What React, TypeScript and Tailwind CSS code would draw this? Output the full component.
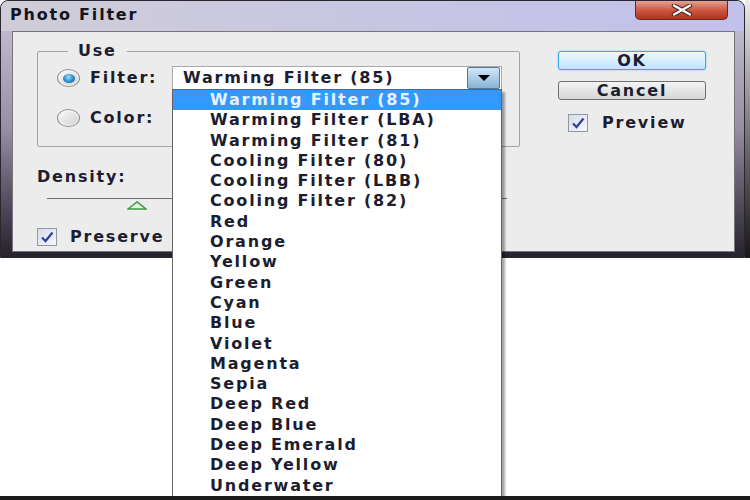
import React from 'react';

const filters = [
    'Warming Filter (85)',
    'Warming Filter (LBA)',
    'Warming Filter (81)',
    'Cooling Filter (80)',
    'Cooling Filter (LBB)',
    'Cooling Filter (82)',
    'Red',
    'Orange',
    'Yellow',
    'Green',
    'Cyan',
    'Blue',
    'Violet',
    'Magenta',
    'Sepia',
    'Deep Red',
    'Deep Blue',
    'Deep Emerald',
    'Deep Yellow',
    'Underwater',
];

const Radio: React.FC<{ checked?: boolean }> = ({ checked }) => (
    <span className="flex h-[18px] w-[23px] shrink-0 items-center justify-center rounded-[50%] border border-[#8b8c8e] bg-linear-to-br from-[#fbfbfb] to-[#cfd0d2] shadow-[inset_0_0_0_1px_#f8f8f8]">
        {checked && (
            <span className="h-[9px] w-[12px] rounded-[50%] bg-[radial-gradient(circle_at_45%_35%,#9be0ff,#2a86c8_55%,#10507f)]" />
        )}
    </span>
);

const CheckBox = () => (
    <span className="flex h-[18px] w-[20px] shrink-0 items-center justify-center border border-[#8e98ab] bg-linear-to-br from-[#d7dce8] to-[#f7f8fb]">
        <svg width="14" height="12" viewBox="0 0 14 12">
            <path d="M2 6.5 L5.5 10 L12.5 1.5" fill="none" stroke="#2f3f9e" strokeWidth="2.2" />
        </svg>
    </span>
);

export default function App() {
    return (
        <div className="relative flex h-[500px] w-[750px] flex-col overflow-hidden bg-white font-['DejaVu_Sans',sans-serif] text-[16px] font-bold tracking-[1.8px] text-[#1d1d30]">
            <div className="flex h-[258px]">
                {/* window frame */}
                <div className="flex w-[745px] flex-col rounded-t-[8px] border border-[#2a2630] bg-linear-to-b from-[#c9c6d6] via-[#978ea6] to-[#26222c]">
                    <div className="flex h-[30px] items-start rounded-t-[8px] bg-linear-to-r from-[#d0cdd8] via-[#c7c6e2] to-[#c1c1ec]">
                        <span className="ml-[9px] mt-[4px] leading-[20px] text-[#151520]">Photo Filter</span>
                        <div className="ml-auto mr-[16px] flex h-[19px] w-[93px] items-center justify-center rounded-b-[5px] border border-t-0 border-[#5e2a24] bg-linear-to-b from-[#e5a293] via-[#cd5843] to-[#b3301c]">
                            <svg width="22" height="12" viewBox="0 0 22 12">
                                <path d="M3 1.5 L19 10.5 M19 1.5 L3 10.5" stroke="#4a2622" strokeWidth="4.5" strokeLinecap="round" />
                                <path d="M3 1.5 L19 10.5 M19 1.5 L3 10.5" stroke="#ffffff" strokeWidth="2.4" strokeLinecap="round" />
                            </svg>
                        </div>
                    </div>

                    {/* client area */}
                    <div className="ml-[11px] flex h-[221px] w-[723px] items-start border border-[#77737e] bg-[#ececec]">
                        <div className="ml-[24px] mt-[11px] flex w-[483px] flex-col">
                            <fieldset className="rounded-[2px] border border-[#a3a3a3] pb-[16px] pl-[19px]">
                                <legend className="ml-[11px] px-[10px] leading-[16px]">Use</legend>
                                <div className="mt-[7px] flex h-[24px] items-center">
                                    <Radio checked />
                                    <span className="ml-[10px] w-[82px]">Filter:</span>
                                    <div className="flex h-[24px] w-[330px] items-center border border-[#a9a9a9] bg-white">
                                        <span className="pl-[10px]">Warming Filter (85)</span>
                                        <div className="ml-auto mr-[1px] flex h-[22px] w-[33px] items-center justify-center rounded-[2px] border border-[#55789a] bg-linear-to-b from-[#d3e7f5] to-[#86b3d6]">
                                            <svg width="12" height="6" viewBox="0 0 12 6">
                                                <path d="M0 0 H12 L6 6 Z" fill="#000" />
                                            </svg>
                                        </div>
                                    </div>
                                </div>
                                <div className="mt-[16px] flex h-[24px] items-center">
                                    <Radio />
                                    <span className="ml-[10px] w-[82px]">Color:</span>
                                </div>
                            </fieldset>

                            <span className="mt-[20px] leading-[20px]">Density:</span>
                            <div className="flex flex-col pl-[10px] pt-[11px]">
                                <div className="h-[1px] w-[460px] bg-[#6f6f6f]" />
                                <svg className="ml-[80px] mt-[2px]" width="20" height="9" viewBox="0 0 20 9">
                                    <path d="M1 8 L10 1 L19 8 Z" fill="#e3f4e3" stroke="#3c9a45" strokeWidth="1.5" />
                                </svg>
                            </div>

                            <div className="mt-[18px] flex h-[18px] items-center">
                                <CheckBox />
                                <span className="ml-[13px] leading-[18px]">Preserve</span>
                            </div>
                        </div>

                        <div className="ml-[38px] mt-[19px] flex w-[148px] flex-col">
                            <div className="flex h-[19px] items-center justify-center rounded-[3px] border border-[#3aa8e2] bg-linear-to-b from-[#edf8fe] to-[#bfe5fb] leading-[17px] shadow-[0_0_2px_#6cc6f2]">
                                OK
                            </div>
                            <div className="mt-[11px] flex h-[19px] items-center justify-center rounded-[3px] border border-[#707070] bg-linear-to-b from-[#f4f4f4] to-[#d6d6d6] leading-[17px]">
                                Cancel
                            </div>
                            <div className="ml-[10px] mt-[14px] flex h-[18px] items-center">
                                <CheckBox />
                                <span className="ml-[14px] leading-[18px]">Preview</span>
                            </div>
                        </div>
                    </div>
                </div>
                <div className="flex-1 bg-linear-to-b from-[#ececec] via-[#7a7a7a] to-[#181818]" />
            </div>

            <div className="flex-1" />
            <div className="relative z-10 h-[4px] bg-[#1b1b1b]" />

            {/* open dropdown list */}
            <div className="absolute left-[172px] top-[89px] flex h-[408px] w-[330px] flex-col border border-[#646464] bg-white shadow-[3px_3px_2px_rgba(0,0,0,0.35)]">
                {filters.map((f, i) => (
                    <div
                        key={f}
                        className={
                            i === 0
                                ? 'h-[20.3px] bg-[#3399ff] pl-[37px] leading-[20.3px] text-[#e8f2ff]'
                                : 'h-[20.3px] pl-[37px] leading-[20.3px]'
                        }
                    >
                        {f}
                    </div>
                ))}
            </div>
        </div>
    );
}
